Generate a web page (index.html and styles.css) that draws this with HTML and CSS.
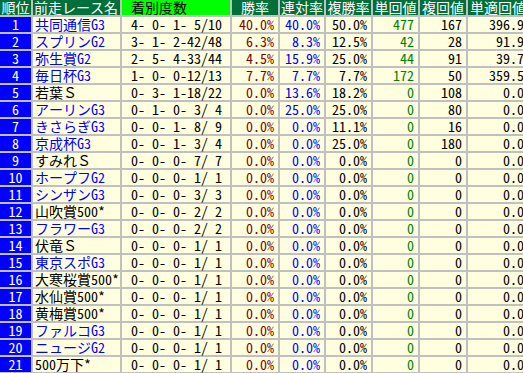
FILE: index.html
```html
<!DOCTYPE html>
<html lang="ja">
<head>
<meta charset="utf-8">
<title>前走レース別成績</title>
<link rel="stylesheet" href="styles.css">
</head>
<body>
<div class="table">
  <div class="row head">
    <div class="h">順位</div>
    <div class="h name">前走レース名</div>
    <div class="h rec lime">着別度数</div>
    <div class="h">勝率</div>
    <div class="h">連対率</div>
    <div class="h">複勝率</div>
    <div class="h">単回値</div>
    <div class="h">複回値</div>
    <div class="h">単適回値</div>
  </div>
  <div class="row"><div class="rank">1</div><div class="name link">共同通信G3</div><div class="rec">4- 0- 1- 5/10</div><div class="num win">40.0%</div><div class="num ren">40.0%</div><div class="num">50.0%</div><div class="num tan">477</div><div class="num">167</div><div class="num">396.9</div></div>
  <div class="row"><div class="rank">2</div><div class="name link">スプリンG2</div><div class="rec">3- 1- 2-42/48</div><div class="num win">6.3%</div><div class="num ren">8.3%</div><div class="num">12.5%</div><div class="num tan">42</div><div class="num">28</div><div class="num">91.9</div></div>
  <div class="row"><div class="rank">3</div><div class="name link">弥生賞G2</div><div class="rec">2- 5- 4-33/44</div><div class="num win">4.5%</div><div class="num ren">15.9%</div><div class="num">25.0%</div><div class="num tan">44</div><div class="num">91</div><div class="num">39.7</div></div>
  <div class="row"><div class="rank">4</div><div class="name link">毎日杯G3</div><div class="rec">1- 0- 0-12/13</div><div class="num win">7.7%</div><div class="num ren">7.7%</div><div class="num">7.7%</div><div class="num tan">172</div><div class="num">50</div><div class="num">359.5</div></div>
  <div class="row"><div class="rank">5</div><div class="name">若葉Ｓ</div><div class="rec">0- 3- 1-18/22</div><div class="num win">0.0%</div><div class="num ren">13.6%</div><div class="num">18.2%</div><div class="num tan">0</div><div class="num">108</div><div class="num">0.0</div></div>
  <div class="row"><div class="rank">6</div><div class="name link">アーリンG3</div><div class="rec">0- 1- 0- 3/ 4</div><div class="num win">0.0%</div><div class="num ren">25.0%</div><div class="num">25.0%</div><div class="num tan">0</div><div class="num">80</div><div class="num">0.0</div></div>
  <div class="row"><div class="rank">7</div><div class="name link">きさらぎG3</div><div class="rec">0- 0- 1- 8/ 9</div><div class="num win">0.0%</div><div class="num ren">0.0%</div><div class="num">11.1%</div><div class="num tan">0</div><div class="num">16</div><div class="num">0.0</div></div>
  <div class="row"><div class="rank">8</div><div class="name link">京成杯G3</div><div class="rec">0- 0- 1- 3/ 4</div><div class="num win">0.0%</div><div class="num ren">0.0%</div><div class="num">25.0%</div><div class="num tan">0</div><div class="num">180</div><div class="num">0.0</div></div>
  <div class="row"><div class="rank">9</div><div class="name">すみれＳ</div><div class="rec">0- 0- 0- 7/ 7</div><div class="num win">0.0%</div><div class="num ren">0.0%</div><div class="num">0.0%</div><div class="num tan">0</div><div class="num">0</div><div class="num">0.0</div></div>
  <div class="row"><div class="rank">10</div><div class="name link">ホープフG2</div><div class="rec">0- 0- 0- 1/ 1</div><div class="num win">0.0%</div><div class="num ren">0.0%</div><div class="num">0.0%</div><div class="num tan">0</div><div class="num">0</div><div class="num">0.0</div></div>
  <div class="row"><div class="rank">11</div><div class="name link">シンザンG3</div><div class="rec">0- 0- 0- 3/ 3</div><div class="num win">0.0%</div><div class="num ren">0.0%</div><div class="num">0.0%</div><div class="num tan">0</div><div class="num">0</div><div class="num">0.0</div></div>
  <div class="row"><div class="rank">12</div><div class="name">山吹賞500*</div><div class="rec">0- 0- 0- 2/ 2</div><div class="num win">0.0%</div><div class="num ren">0.0%</div><div class="num">0.0%</div><div class="num tan">0</div><div class="num">0</div><div class="num">0.0</div></div>
  <div class="row"><div class="rank">13</div><div class="name link">フラワーG3</div><div class="rec">0- 0- 0- 2/ 2</div><div class="num win">0.0%</div><div class="num ren">0.0%</div><div class="num">0.0%</div><div class="num tan">0</div><div class="num">0</div><div class="num">0.0</div></div>
  <div class="row"><div class="rank">14</div><div class="name">伏竜Ｓ</div><div class="rec">0- 0- 0- 1/ 1</div><div class="num win">0.0%</div><div class="num ren">0.0%</div><div class="num">0.0%</div><div class="num tan">0</div><div class="num">0</div><div class="num">0.0</div></div>
  <div class="row"><div class="rank">15</div><div class="name link">東京スポG3</div><div class="rec">0- 0- 0- 1/ 1</div><div class="num win">0.0%</div><div class="num ren">0.0%</div><div class="num">0.0%</div><div class="num tan">0</div><div class="num">0</div><div class="num">0.0</div></div>
  <div class="row"><div class="rank">16</div><div class="name">大寒桜賞500*</div><div class="rec">0- 0- 0- 1/ 1</div><div class="num win">0.0%</div><div class="num ren">0.0%</div><div class="num">0.0%</div><div class="num tan">0</div><div class="num">0</div><div class="num">0.0</div></div>
  <div class="row"><div class="rank">17</div><div class="name">水仙賞500*</div><div class="rec">0- 0- 0- 1/ 1</div><div class="num win">0.0%</div><div class="num ren">0.0%</div><div class="num">0.0%</div><div class="num tan">0</div><div class="num">0</div><div class="num">0.0</div></div>
  <div class="row"><div class="rank">18</div><div class="name">黄梅賞500*</div><div class="rec">0- 0- 0- 1/ 1</div><div class="num win">0.0%</div><div class="num ren">0.0%</div><div class="num">0.0%</div><div class="num tan">0</div><div class="num">0</div><div class="num">0.0</div></div>
  <div class="row"><div class="rank">19</div><div class="name link">ファルコG3</div><div class="rec">0- 0- 0- 1/ 1</div><div class="num win">0.0%</div><div class="num ren">0.0%</div><div class="num">0.0%</div><div class="num tan">0</div><div class="num">0</div><div class="num">0.0</div></div>
  <div class="row"><div class="rank">20</div><div class="name link">ニュージG2</div><div class="rec">0- 0- 0- 1/ 1</div><div class="num win">0.0%</div><div class="num ren">0.0%</div><div class="num">0.0%</div><div class="num tan">0</div><div class="num">0</div><div class="num">0.0</div></div>
  <div class="row"><div class="rank">21</div><div class="name">500万下*</div><div class="rec">0- 0- 0- 1/ 1</div><div class="num win">0.0%</div><div class="num ren">0.0%</div><div class="num">0.0%</div><div class="num tan">0</div><div class="num">0</div><div class="num">0.0</div></div>
</div>
</body>
</html>
```

FILE: styles.css
```css
html, body {
  margin: 0;
  padding: 0;
  background: #c0c0c0;
}

body {
  font-family: "Noto Sans Mono CJK JP", "Noto Sans CJK JP", monospace;
  font-size: 14px;
  line-height: 15px;
  color: #000;
  width: 523px;
  height: 373px;
  overflow: hidden;
}

.table {
  display: flex;
  flex-direction: column;
  gap: 2px;
  background: #c0c0c0;
}

.row {
  display: grid;
  grid-template-columns: 31px 87px 108px 46px 44px 45px 45px 46px 60px;
  column-gap: 2px;
  height: 15px;
}

.row > div {
  background: #ffffe0;
  height: 15px;
  white-space: pre;
}

.rank,
.rec,
.num {
  font-feature-settings: "hwid";
}

.head > .h {
  background: #006f3a;
  color: #fff;
  text-align: center;
}

.head > .h.lime {
  background: #00ff00;
  color: #000;
}

.head > .h.name {
  text-align: left;
  padding-left: 1px;
}

.row > .rank {
  background: #0000ff;
  color: #fff;
  text-align: center;
}

.name {
  padding-left: 2px;
}

.link {
  color: #0000ff;
}

.rec {
  padding-left: 9px;
}

.head > .h.rec {
  text-align: left;
  padding-left: 9px;
}

.num {
  text-align: right;
  padding-right: 4px;
}

.num.win {
  color: #800000;
}

.num.ren {
  color: #0000ff;
}

.num.tan {
  color: #008000;
}
```
